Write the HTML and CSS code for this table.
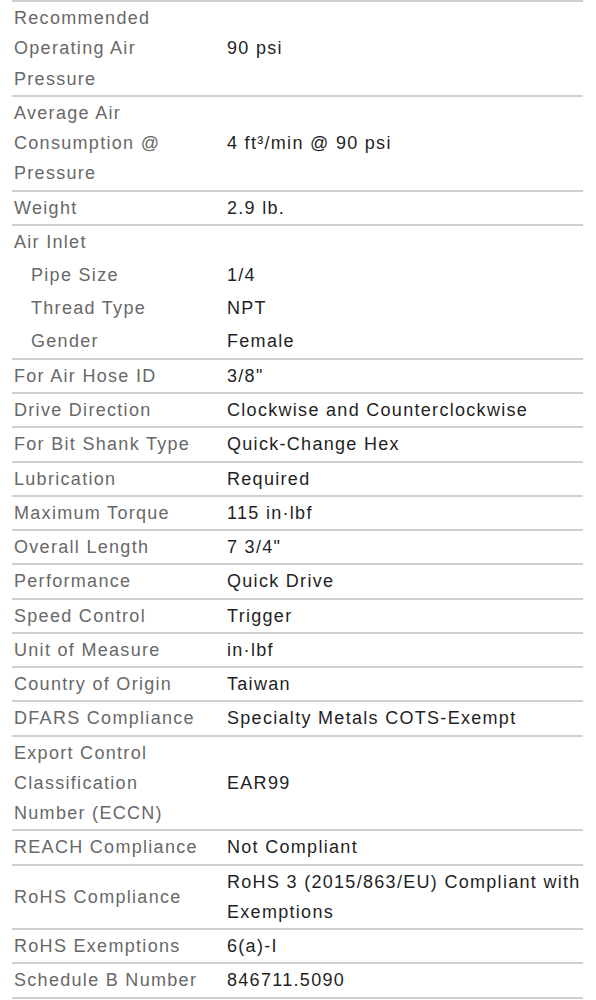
FILE: index.html
```html
<!DOCTYPE html>
<html lang="en">
<head>
<meta charset="utf-8">
<title>Specifications</title>
<link rel="stylesheet" href="styles.css">
</head>
<body>
<div class="specs">
  <div class="row"><div class="label">Recommended Operating Air Pressure</div><div class="value">90 psi</div></div>
  <div class="row"><div class="label">Average Air Consumption @ Pressure</div><div class="value">4 ft³/min @ 90 psi</div></div>
  <div class="row"><div class="label">Weight</div><div class="value">2.9 lb.</div></div>
  <div class="group">
    <div class="sub"><div class="label">Air Inlet</div><div class="value"></div></div>
    <div class="sub"><div class="label indent">Pipe Size</div><div class="value">1/4</div></div>
    <div class="sub"><div class="label indent">Thread Type</div><div class="value">NPT</div></div>
    <div class="sub"><div class="label indent">Gender</div><div class="value">Female</div></div>
  </div>
  <div class="row"><div class="label">For Air Hose ID</div><div class="value">3/8"</div></div>
  <div class="row"><div class="label">Drive Direction</div><div class="value">Clockwise and Counterclockwise</div></div>
  <div class="row"><div class="label">For Bit Shank Type</div><div class="value">Quick-Change Hex</div></div>
  <div class="row"><div class="label">Lubrication</div><div class="value">Required</div></div>
  <div class="row"><div class="label">Maximum Torque</div><div class="value">115 in·lbf</div></div>
  <div class="row"><div class="label">Overall Length</div><div class="value">7 3/4"</div></div>
  <div class="row"><div class="label">Performance</div><div class="value">Quick Drive</div></div>
  <div class="row"><div class="label">Speed Control</div><div class="value">Trigger</div></div>
  <div class="row"><div class="label">Unit of Measure</div><div class="value">in·lbf</div></div>
  <div class="row"><div class="label">Country of Origin</div><div class="value">Taiwan</div></div>
  <div class="row"><div class="label">DFARS Compliance</div><div class="value">Specialty Metals COTS-Exempt</div></div>
  <div class="row"><div class="label">Export Control Classification Number (ECCN)</div><div class="value">EAR99</div></div>
  <div class="row"><div class="label">REACH Compliance</div><div class="value">Not Compliant</div></div>
  <div class="row"><div class="label">RoHS Compliance</div><div class="value">RoHS 3 (2015/863/EU) Compliant with Exemptions</div></div>
  <div class="row"><div class="label">RoHS Exemptions</div><div class="value">6(a)-I</div></div>
  <div class="row"><div class="label">Schedule B Number</div><div class="value">846711.5090</div></div>
</div>
</body>
</html>
```
FILE: styles.css
```css
html, body {
  margin: 0;
  padding: 0;
  background: #ffffff;
}

body {
  font-family: "Liberation Sans", Arial, Helvetica, sans-serif;
  font-size: 18px;
  letter-spacing: 1.3px;
  line-height: 30.25px;
}

.specs {
  margin: 0 12px 0 12px;
  width: 571px;
  border-top: 2px solid #d0d0d0;
}

.row,
.group {
  border-bottom: 2px solid #d0d0d0;
}

.row,
.sub {
  display: grid;
  grid-template-columns: 215px 1fr;
  align-items: center;
}

.row {
  padding: 1px 0;
}

.sub {
  padding: 1.4px 0;
}

.label {
  color: #686868;
  padding: 0 16px 0 2px;
}

.label.indent {
  padding-left: 19px;
}

.value {
  color: #1f1f1f;
}
```
